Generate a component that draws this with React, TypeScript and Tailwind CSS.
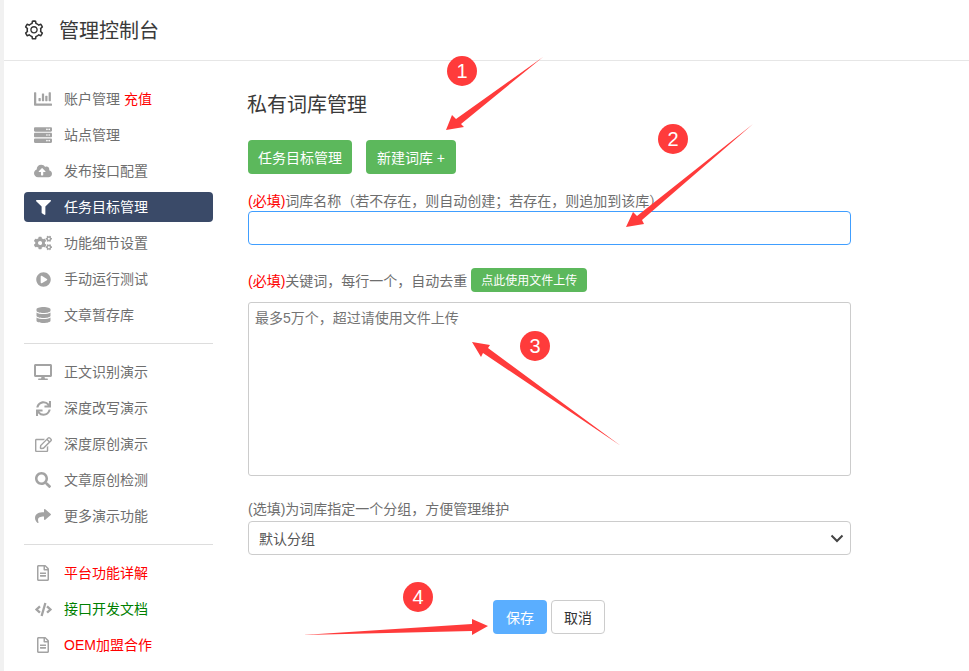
import { ReactNode } from "react";
import { AiOutlineSetting } from "react-icons/ai";
import {
  FaChartBar,
  FaServer,
  FaCloudUploadAlt,
  FaFilter,
  FaCogs,
  FaPlayCircle,
  FaDatabase,
  FaDesktop,
  FaSync,
  FaRegEdit,
  FaSearch,
  FaShare,
  FaRegFileAlt,
  FaCode,
} from "react-icons/fa";

type NavItem = { icon: ReactNode; label: ReactNode; active?: boolean };

const iconClass = "w-[18px] h-[18px]";

const groupOne: NavItem[] = [
  {
    icon: <FaChartBar className={iconClass} />,
    label: (
      <>
        账户管理 <span className="text-[#ff0000]">充值</span>
      </>
    ),
  },
  { icon: <FaServer className={iconClass} />, label: "站点管理" },
  { icon: <FaCloudUploadAlt className={iconClass} />, label: "发布接口配置" },
  { icon: <FaFilter className="w-[15px] h-[15px]" />, label: "任务目标管理", active: true },
  { icon: <FaCogs className={iconClass} />, label: "功能细节设置" },
  { icon: <FaPlayCircle className="w-[15px] h-[15px]" />, label: "手动运行测试" },
  { icon: <FaDatabase className="w-[15px] h-[16px]" />, label: "文章暂存库" },
];

const groupTwo: NavItem[] = [
  { icon: <FaDesktop className={iconClass} />, label: "正文识别演示" },
  { icon: <FaSync className="w-[15px] h-[15px]" />, label: "深度改写演示" },
  { icon: <FaRegEdit className="w-[17px] h-[17px]" />, label: "深度原创演示" },
  { icon: <FaSearch className="w-[16px] h-[16px]" />, label: "文章原创检测" },
  { icon: <FaShare className="w-[16px] h-[16px]" />, label: "更多演示功能" },
];

const groupThree: NavItem[] = [
  { icon: <FaRegFileAlt className="w-[14px] h-[16px]" />, label: <span className="text-[#ff0000]">平台功能详解</span> },
  { icon: <FaCode className="w-[17px] h-[17px]" />, label: <span className="text-[#008000]">接口开发文档</span> },
  { icon: <FaRegFileAlt className="w-[14px] h-[16px]" />, label: <span className="text-[#ff0000]">OEM加盟合作</span> },
];

const NavGroup = ({ items }: { items: NavItem[] }) => (
  <ul className="flex flex-col gap-[6px]">
    {items.map((item, i) => (
      <li
        key={i}
        className={`flex items-center h-[30px] rounded-[4px] text-[14px] ${
          item.active ? "bg-[#3a4a68] text-white" : "text-[#6e6e6e]"
        }`}
      >
        <span className={`w-[40px] pl-[10px] shrink-0 ${item.active ? "text-white" : "text-[#a3a3a3]"}`}>
          <span className="w-[18px] flex justify-center">{item.icon}</span>
        </span>
        <span className="whitespace-nowrap">{item.label}</span>
      </li>
    ))}
  </ul>
);

const Required = () => <span className="text-[#ff0000]">(必填)</span>;

const Annotations = () => (
  <>
    <svg className="absolute left-0 top-0 pointer-events-none" width="969" height="671" viewBox="0 0 969 671">
      <polygon points="543,57 461,124 464,127 446,130 452,115 456,119" fill="#ff3b3b" />
      <polygon points="753,124 642,220 644,224 626,227 633,212 637,216" fill="#ff3b3b" />
      <polygon points="621,446 483,353 481,357 472,342 490,345 488,348" fill="#ff3b3b" />
      <polygon points="303,635 472,624 472,619 488,626 472,635 472,631" fill="#ff3b3b" />
    </svg>
    {[
      { n: 1, cls: "left-[447px] top-[56px]" },
      { n: 2, cls: "left-[658px] top-[124px]" },
      { n: 3, cls: "left-[520px] top-[331px]" },
      { n: 4, cls: "left-[403px] top-[582px]" },
    ].map((b) => (
      <span
        key={b.n}
        className={`absolute ${b.cls} w-[30px] h-[30px] rounded-full bg-[#ff3b3b] text-white text-[20px] flex items-center justify-center`}
      >
        {b.n}
      </span>
    ))}
  </>
);

export default function App() {
  return (
    <div
      className="relative w-[969px] h-[671px] overflow-hidden bg-[#f1f1f1] pl-[4px]"
      style={{ fontFamily: '"Liberation Sans", "Noto Sans CJK SC", sans-serif' }}
    >
      <div className="bg-white h-full flex flex-col">
        <header className="h-[61px] border-b border-[#e6e6e6] flex items-center pl-[19px] shrink-0">
          <AiOutlineSetting className="w-[22px] h-[22px] text-[#333333]" />
          <h1 className="ml-[14px] text-[20px] font-normal text-[#3a3a3a] pt-[2px]">管理控制台</h1>
        </header>

        <div className="flex flex-1">
          <aside className="w-[189px] ml-[20px] pt-[23px] shrink-0">
            <NavGroup items={groupOne} />
            <div className="h-px bg-[#dddddd] mt-[13px] mb-[13px]" />
            <NavGroup items={groupTwo} />
            <div className="h-px bg-[#dddddd] mt-[13px] mb-[13px]" />
            <NavGroup items={groupThree} />
          </aside>

          <main className="ml-[35px] w-[603px] pt-[30px] text-[14px] text-[#6e6e6e]">
            <h2 className="text-[20px] leading-[28px] font-normal text-[#3a3a3a] -ml-px">私有词库管理</h2>

            <div className="flex gap-[14px] mt-[21px]">
              <button className="h-[34px] w-[104px] pt-[2px] rounded-[4px] bg-[#5cb85c] text-white text-[14px]">任务目标管理</button>
              <button className="h-[34px] w-[90px] pt-[2px] rounded-[4px] bg-[#5cb85c] text-white text-[14px]">新建词库 +</button>
            </div>

            <label className="block mt-[17px] leading-[20px] h-[20px] whitespace-nowrap">
              <Required />
              词库名称（若不存在，则自动创建；若存在，则追加到该库）
            </label>
            <input className="block w-full h-[34px] rounded-[4px] border border-[#409eff] bg-white outline-none" />

            <div className="flex items-center mt-[23px] h-[24px]">
              <span className="pt-[2px]">
                <Required />
                关键词，每行一个，自动去重
              </span>
              <button className="ml-[4px] h-[24px] w-[116px] pt-[2px] rounded-[4px] bg-[#5cb85c] text-white text-[12px]">点此使用文件上传</button>
            </div>
            <textarea
              className="block mt-[10px] w-full h-[174px] rounded-[3px] border border-[#cccccc] px-[6px] pt-[5px] pb-[6px] outline-none resize-none placeholder:text-[#757575]"
              placeholder="最多5万个，超过请使用文件上传"
            />

            <label className="block mt-[23px] leading-[20px] h-[22px]">(选填)为词库指定一个分组，方便管理维护</label>
            <div className="relative">
              <select className="block w-full h-[34px] pt-[2px] appearance-none rounded-[4px] border border-[#cccccc] bg-white pl-[10px] text-[#555555] outline-none">
                <option>默认分组</option>
              </select>
              <svg className="absolute right-[7px] top-[11px]" width="14" height="12" viewBox="0 0 14 12" fill="none">
                <path d="M1.5 3.5 7 9l5.5-5.5" stroke="#444444" strokeWidth="2" />
              </svg>
            </div>

            <div className="flex gap-[4px] mt-[45px] ml-[245px]">
              <button className="h-[34px] w-[54px] pt-[2px] rounded-[4px] bg-[#5aaeff] text-white text-[14px]">保存</button>
              <button className="h-[34px] w-[54px] pt-[2px] rounded-[4px] border border-[#cccccc] bg-white text-[#333333] text-[14px]">取消</button>
            </div>
          </main>
        </div>
      </div>
      <Annotations />
    </div>
  );
}
